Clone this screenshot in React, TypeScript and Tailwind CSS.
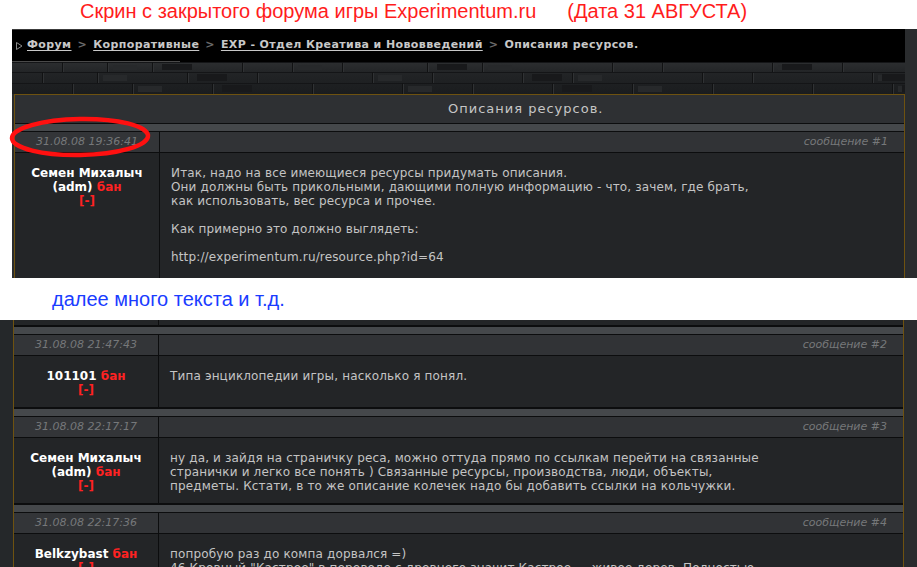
import React from 'react';

type Post = {
  date: string;
  num: number;
  author: string;
  admin?: boolean;
  lines: string[];
};

const posts: Post[] = [
  {
    date: '31.08.08 21:47:43',
    num: 2,
    author: '101101',
    lines: ['Типа энциклопедии игры, насколько я понял.'],
  },
  {
    date: '31.08.08 22:17:17',
    num: 3,
    author: 'Семен Михалыч',
    admin: true,
    lines: [
      'ну да, и зайдя на страничку реса, можно оттуда прямо по ссылкам перейти на связанные',
      'странички и легко все понять ) Связанные ресурсы, производства, люди, объекты,',
      'предметы. Кстати, в то же описание колечек надо бы добавить ссылки на кольчужки.',
    ],
  },
  {
    date: '31.08.08 22:17:36',
    num: 4,
    author: 'Belkzybast',
    lines: [
      'попробую раз до компа дорвался =)',
      '46 Кровный "Кастрое" в переводе с древнего значит Кастрое — живое дерев. Полностью',
    ],
  },
];

const firstLines = [
  'Итак, надо на все имеющиеся ресурсы придумать описания.',
  'Они должны быть прикольными, дающими полную информацию - что, зачем, где брать,',
  'как использовать, вес ресурса и прочее.',
  '',
  'Как примерно это должно выглядеть:',
  '',
  'http://experimentum.ru/resource.php?id=64',
  '',
];

// stone strip under the breadcrumb
const bricks = [
  { y: 0, h: 10, xs: [50, 95, 140, 230, 280, 330, 415, 470, 600, 650, 760, 830] },
  { y: 10, h: 11, xs: [30, 85, 175, 245, 360, 420, 510, 560, 690, 740, 860] },
  { y: 21, h: 11, xs: [60, 120, 200, 300, 390, 460, 540, 620, 700, 800, 880] },
];

function Texture() {
  return (
    <svg width="893" height="32" className="block">
      <defs>
        <linearGradient id="stone" x1="0" y1="0" x2="0" y2="1">
          <stop offset="0" stopColor="#2c2e30" />
          <stop offset="0.35" stopColor="#222426" />
          <stop offset="1" stopColor="#1a1c1e" />
        </linearGradient>
      </defs>
      <rect width="893" height="32" fill="url(#stone)" />
      {bricks.map((row) => (
        <g key={row.y}>
          <line x1="0" x2="893" y1={row.y + 0.5} y2={row.y + 0.5} stroke="#141517" />
          {row.xs.map((x, i) => (
            <g key={x}>
              <line x1={x + 0.5} x2={x + 0.5} y1={row.y} y2={row.y + row.h} stroke="#111213" />
              <line x1={x + 1.5} x2={x + 1.5} y1={row.y + 1} y2={row.y + row.h} stroke="#303234" />
              {i % 3 === 1 && (
                <rect x={x + 6} y={row.y + 3} width="24" height={row.h - 5} fill="#27292b" />
              )}
              {i % 4 === 2 && (
                <rect x={x + 10} y={row.y + 2} width="30" height={row.h - 4} fill="#18191b" />
              )}
            </g>
          ))}
        </g>
      ))}
    </svg>
  );
}

function Author({ name, admin }: { name: string; admin?: boolean }) {
  return (
    <div className="text-center font-bold text-[12px] leading-[14px] text-white">
      {admin ? (
        <>
          <div>{name}</div>
          <div>
            (adm) <span className="text-[#ff2222]">бан</span>
          </div>
        </>
      ) : (
        <div>
          {name} <span className="text-[#ff2222]">бан</span>
        </div>
      )}
      <div className="text-[#ff2222]">[-]</div>
    </div>
  );
}

function PostBlock({ post, thick }: { post: Post; thick?: boolean }) {
  return (
    <div>
      <div className={thick ? 'h-[2px] bg-[#0c0d0e]' : 'h-[1px] bg-[#0c0d0e]'} />
      <div className="h-[7px] bg-[#45484b]" />
      <div className="h-[1px] bg-[#0c0d0e]" />
      <div className="flex h-[20px] bg-[#313336] italic text-[11px] text-[#76787a]">
        <div className="w-[144px] flex items-center justify-center bg-[#333538]">{post.date}</div>
        <div className="w-[1px] bg-[#0c0d0e]" />
        <div className="flex-1 flex items-center justify-end pr-[16px]">сообщение #{post.num}</div>
      </div>
      <div className="h-[1px] bg-[#0c0d0e]" />
      <div className="flex bg-[#232527]">
        <div className="w-[144px] pt-[13px] pb-[10px]">
          <Author name={post.author} admin={post.admin} />
        </div>
        <div className="w-[1px] bg-[#0c0d0e]" />
        <div className="flex-1 pl-[11px] pt-[13px] text-[12px] leading-[14px] tracking-[0.15px] text-[#c4c4c4] whitespace-pre">
          {post.lines.map((l, i) => (
            <div key={i} className="h-[14px]">{l}</div>
          ))}
        </div>
      </div>
    </div>
  );
}

export default function App() {
  return (
    <div className="relative w-[917px] h-[567px] overflow-hidden bg-white font-['DejaVu_Sans',sans-serif]">
      {/* caption */}
      <div className="h-[29px] pl-[80px] flex items-start font-['Liberation_Sans',sans-serif] text-[20px] leading-[22px] text-[#ff1c1c]">
        <span>Скрин с закрытого форума игры Experimentum.ru</span>
        <span className="ml-[31px]">(Дата 31 АВГУСТА)</span>
      </div>

      {/* upper screenshot */}
      <div className="flex h-[249px] pl-[12px]">
        <div className="w-[893px] flex flex-col bg-[#2a2c2e]">
          <div className="h-[33px] bg-black flex flex-col">
            <div className="h-[1px] w-[168px] bg-[#3c3c3c]" />
            <div className="flex-1 flex items-center pl-[4px] text-[11px] font-bold tracking-[0.4px] text-[#c8c8c8] gap-[6px]">
              <svg width="7" height="8" viewBox="0 0 7 8" className="mr-[-2px]">
                <path d="M0.5 0.5 L6 4 L0.5 7.5 Z" fill="none" stroke="#8a8a8a" />
              </svg>
              <span className="underline underline-offset-2">Форум</span>
              <span className="text-[#6a6a6a]">&gt;</span>
              <span className="underline underline-offset-2">Корпоративные</span>
              <span className="text-[#6a6a6a]">&gt;</span>
              <span className="underline underline-offset-2">EXP - Отдел Креатива и Нововведений</span>
              <span className="text-[#6a6a6a]">&gt;</span>
              <span>Описания ресурсов.</span>
            </div>
            <div className="h-[1px] w-[168px] bg-[#4a4a4a]" />
          </div>
          <Texture />
          <div className="ml-[2px] w-[891px] flex-1 overflow-hidden border-x border-t border-[#6e5210] bg-[#232527]">
            <div className="h-[28px] bg-[#2e3033] flex items-center pl-[433px] text-[13px] text-[#c6c6c6] tracking-[1px]">
              Описания ресурсов.
            </div>
            <PostBlock
              post={{ date: '31.08.08 19:36:41', num: 1, author: 'Семен Михалыч', admin: true, lines: firstLines }}
            />
          </div>
        </div>
        <div className="flex-1 bg-[#2a2c2e]" />
      </div>

      {/* note between screenshots */}
      <div className="h-[42px] flex items-center pl-[52px] font-['Liberation_Sans',sans-serif] text-[20px] text-[#1a3cff]">
        далее много текста и т.д.
      </div>

      {/* lower screenshot */}
      <div className="flex h-[247px]">
        <div className="w-[13px] bg-[#25282a]" />
        <div className="w-[891px] border-x border-[#6e5210] bg-[#232527] overflow-hidden">
          <div className="flex h-[5px]">
            <div className="w-[144px]" />
            <div className="w-[1px] bg-[#0c0d0e]" />
          </div>
          {posts.map((p) => (
            <PostBlock key={p.num} post={p} thick />
          ))}
        </div>
        <div className="flex-1 bg-[#2a2c2e]" />
      </div>

      {/* hand drawn mark round the date */}
      <svg className="absolute left-0 top-0 pointer-events-none" width="917" height="567">
        <ellipse cx="80" cy="137" rx="68" ry="18" fill="none" stroke="#ff1010" strokeWidth="4.5" transform="rotate(-1 80 137)" />
      </svg>
    </div>
  );
}
